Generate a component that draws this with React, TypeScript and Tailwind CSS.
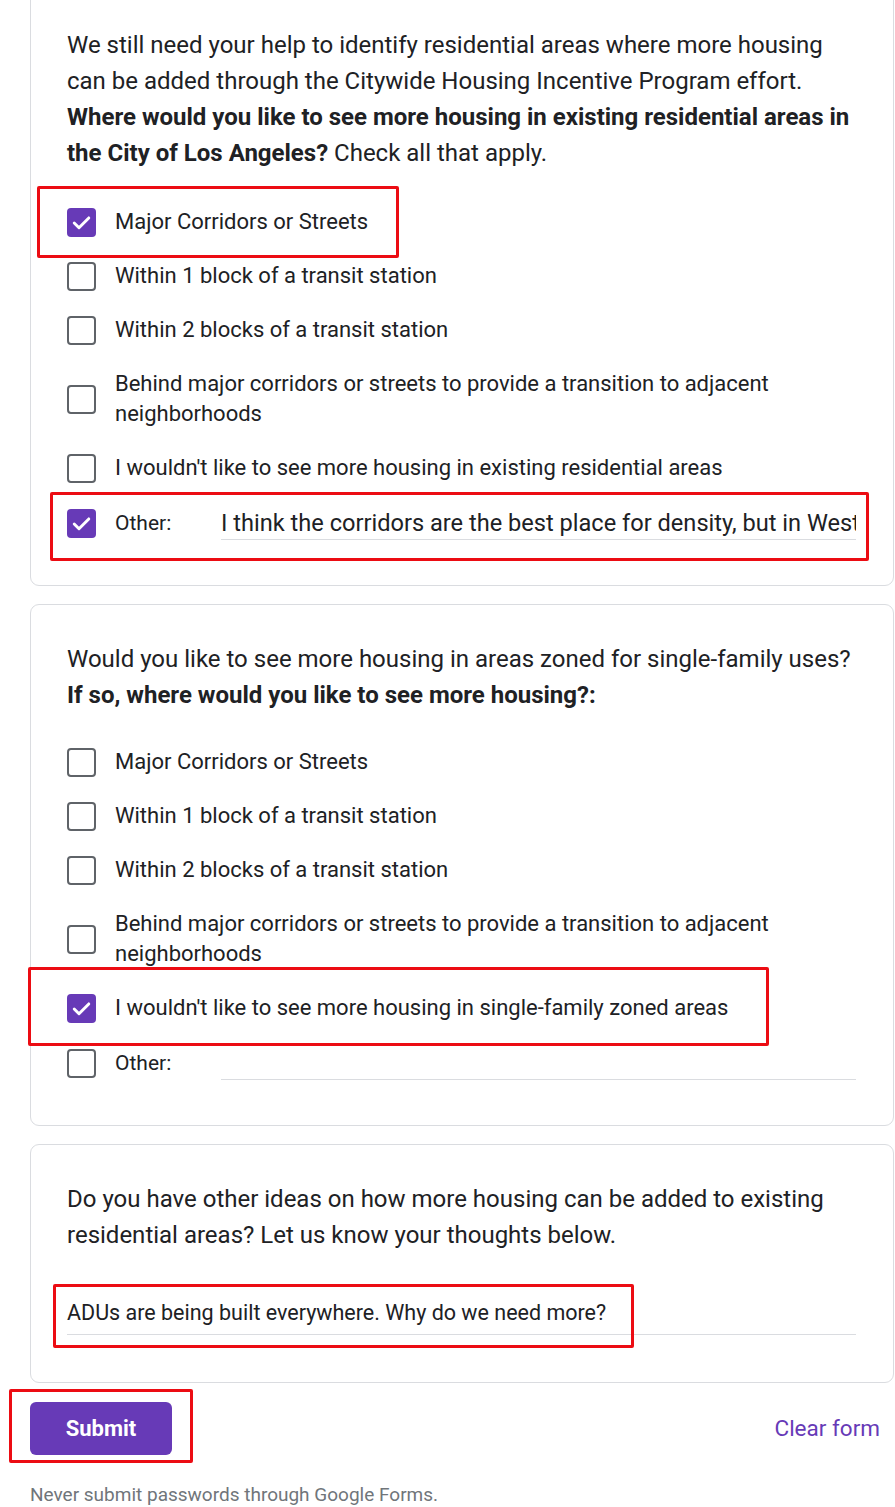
import React from 'react';

const font = { fontFamily: 'Roboto, "Noto Sans", Arial, sans-serif' };

const Check = ({ checked }: { checked?: boolean }) =>
  checked ? (
    <span className="flex h-[29px] w-[29px] shrink-0 items-center justify-center rounded-[4px] bg-[#673ab7]">
      <svg viewBox="0 0 24 24" className="h-[25px] w-[25px]" fill="none" stroke="white" strokeWidth={2.8} strokeLinecap="round" strokeLinejoin="round">
        <path d="M5 12.5l4.6 4.6L19 7.6" />
      </svg>
    </span>
  ) : (
    <span className="block h-[29px] w-[29px] shrink-0 rounded-[4px] border-[2.5px] border-[#5f6368]" />
  );

const Option = ({ label, checked }: { label: string; checked?: boolean }) => (
  <div className="flex items-center gap-[19px] py-[12px]">
    <Check checked={checked} />
    <span className="text-[22px] leading-[30px] text-[#202124]">{label}</span>
  </div>
);

const OtherRow = ({ checked, value }: { checked?: boolean; value?: string }) => (
  <div className="flex items-center gap-[19px] py-[12px]">
    <Check checked={checked} />
    <span className="w-[87px] shrink-0 text-[21px] leading-[30px] text-[#202124]">Other:</span>
    <div className="min-w-0 flex-1 translate-y-[1px] overflow-hidden whitespace-nowrap border-b border-[#dadce0] pb-[1px] text-[23.6px] leading-[30px] text-[#202124]">
      {value || '\u00a0'}
    </div>
  </div>
);

const Card = ({ children, className = '' }: { children: React.ReactNode; className?: string }) => (
  <div className={`rounded-[9px] border border-[#dadce0] bg-white pl-[36px] pr-[37px] pt-[36px] ${className}`}>{children}</div>
);

const RedBox = ({ l, t, w, h }: { l: number; t: number; w: number; h: number }) => (
  <div
    className="pointer-events-none absolute rounded-[2px] border-[3px] border-[#ec0c13]"
    style={{ left: l, top: t, width: w, height: h }}
  />
);

const options = [
  'Major Corridors or Streets',
  'Within 1 block of a transit station',
  'Within 2 blocks of a transit station',
  'Behind major corridors or streets to provide a transition to adjacent neighborhoods',
];

export default function App() {
  return (
    <div className="relative h-[1507px] w-[895px] overflow-hidden bg-white" style={font}>
      <div className="ml-[30px] flex w-[864px] flex-col gap-[18px]">
        {/* Question 1 */}
        <Card className="-mt-[10px] pb-[34px]">
          <p className="text-[24px] leading-[36px] text-[#202124]">
            We still need your help to identify residential areas where more housing can be added through the Citywide Housing
            Incentive Program effort.{' '}
            <b className="font-bold">Where would you like to see more housing in existing residential areas in the City of Los Angeles?</b>{' '}
            Check all that apply.
          </p>
          <div className="mt-[24px]">
            {options.map((o, i) => (
              <Option key={o} label={o} checked={i === 0} />
            ))}
            <Option label="I wouldn't like to see more housing in existing residential areas" />
            <OtherRow checked value="I think the corridors are the best place for density, but in Westwood" />
          </div>
        </Card>

        {/* Question 2 */}
        <Card className="pb-[34px]">
          <p className="text-[24px] leading-[36px] text-[#202124]">
            Would you like to see more housing in areas zoned for single-family uses?{' '}
            <b className="font-bold">If so, where would you like to see more housing?:</b>
          </p>
          <div className="mt-[22px]">
            {options.map((o) => (
              <Option key={o} label={o} />
            ))}
            <Option label="I wouldn't like to see more housing in single-family zoned areas" checked />
            <OtherRow />
          </div>
        </Card>

        {/* Question 3 */}
        <Card className="pb-[47px]">
          <p className="text-[24px] leading-[36px] text-[#202124]">
            Do you have other ideas on how more housing can be added to existing residential areas? Let us know your thoughts below.
          </p>
          <div className="mt-[45px] border-b border-[#dadce0] pb-[6px] text-[21.5px] leading-[30px] text-[#202124]">
            ADUs are being built everywhere. Why do we need more?
          </div>
        </Card>
      </div>

      <div className="ml-[30px] mt-[19px] flex w-[850px] items-center justify-between">
        <button className="h-[53px] w-[142px] rounded-[6px] bg-[#673ab7] text-[22px] font-bold text-white">Submit</button>
        <span className="text-[22.5px] text-[#673ab7]">Clear form</span>
      </div>

      <p className="ml-[30px] mt-[28px] text-[19px] leading-[24px] text-[#70757a]">Never submit passwords through Google Forms.</p>

      <RedBox l={37} t={186} w={362} h={72} />
      <RedBox l={50} t={492} w={819} h={69} />
      <RedBox l={28} t={967} w={741} h={79} />
      <RedBox l={53} t={1284} w={581} h={64} />
      <RedBox l={9} t={1389} w={184} h={74} />
    </div>
  );
}
